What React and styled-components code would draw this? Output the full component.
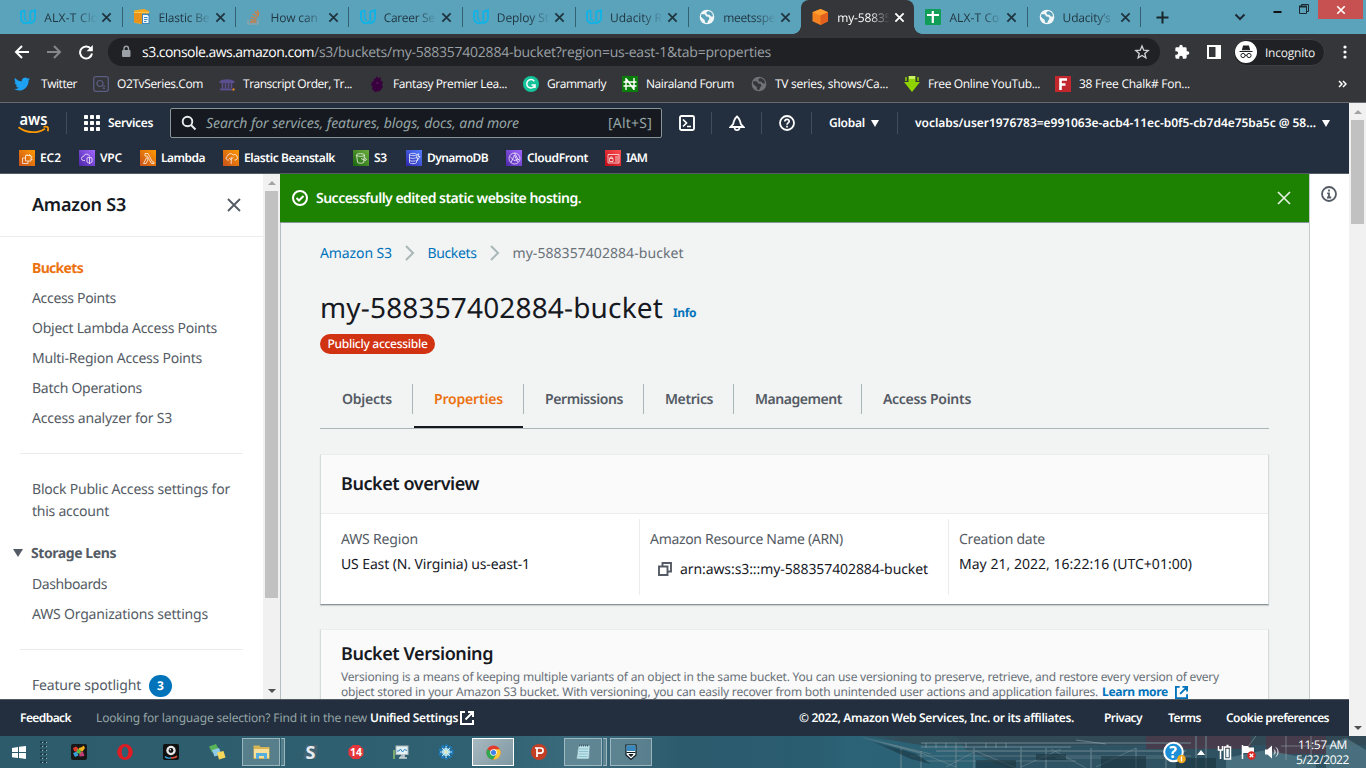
import React, { useLayoutEffect, useRef } from 'react';
import styled, { createGlobalStyle, css } from 'styled-components';

const EMBER = '"Noto Sans", "Open Sans", sans-serif';
const SEGOE = '"Open Sans", "Noto Sans", sans-serif';

const Global = createGlobalStyle`
  * { box-sizing: border-box; }
  body { margin: 0; overflow: hidden; font-family: ${EMBER}; }
  svg { display: block; flex: none; }
`;

/* ---------- text that is tracked to a given measure ---------- */
function Measured({ w, children, className }) {
  const ref = useRef(null);
  useLayoutEffect(() => {
    const el = ref.current;
    if (!el || !w) return;
    el.style.letterSpacing = '0px';
    const natural = el.getBoundingClientRect().width;
    el.style.letterSpacing = `${(w - natural) / Math.max(1, el.textContent.length)}px`;
  }, [w, children]);
  return <span className={className} ref={ref}>{children}</span>;
}
const Text = styled(Measured)`
  display: inline-block;
  flex: none;
  white-space: nowrap;
  text-rendering: geometricPrecision;
  font-family: ${p => (p.$ui ? SEGOE : EMBER)};
  font-size: ${p => p.$size || 14}px;
  font-weight: ${p => p.$weight || 400};
  font-style: ${p => (p.$italic ? 'italic' : 'normal')};
  color: ${p => p.$color || 'inherit'};
  margin-bottom: ${p => (!p.$flat && (p.$size === 12 || p.$size === 28) ? 2 : 0)}px;
`;

/* ---------- frame ---------- */
const Screen = styled.div`
  width: 1366px; height: 768px; display: flex; flex-direction: column; overflow: hidden;
  background: #f2f3f3;
`;
const Row = styled.div`display: flex; align-items: center;`;
const Spacer = styled.div`flex: ${p => (p.$w ? `0 0 ${p.$w}px` : '1')};`;

/* ---------- browser chrome ---------- */
const TabStrip = styled.div`
  height: 34px; flex: none; background: #5ba2bb; display: flex; padding-left: 9px;
`;
const TabBox = styled.div`
  position: relative; width: 113.15px; height: 34px; flex: none; display: flex; align-items: center; padding-left: 11.3px;
  color: ${p => (p.$active ? '#fff' : '#1f3640')};
  ${p => p.$active && css`
    background: #35363a; border-radius: 8px 8px 0 0;
    &::before, &::after { content: ''; position: absolute; bottom: 0; width: 8px; height: 8px; }
    &::before { left: -8px; background: radial-gradient(circle at 0 0, transparent 7.5px, #35363a 8px); }
    &::after { right: -8px; background: radial-gradient(circle at 100% 0, transparent 7.5px, #35363a 8px); }
  `}
  ${p => p.$line && css`
    &::after { content: ''; position: absolute; right: -1px; top: 7px; width: 1px; height: 20px; background: #35606f; }
  `}
`;
const TabTitle = styled.div`
  width: 54px; margin-left: 8px; overflow: hidden; height: 20px; display: flex; align-items: center;
  mask-image: linear-gradient(90deg, #000 60%, transparent 98%);
`;
const TabClose = styled.div`margin-left: 3px;`;
const WindowButtons = styled.div`display: flex; align-items: flex-start; margin-left: auto;`;
const CloseWindow = styled.div`
  width: 45px; height: 19px; background: #c75050; display: grid; place-items: center; margin: 0 3px 0 9px;
`;
const Toolbar = styled.div`
  height: 34px; flex: none; background: #35363a; display: flex; align-items: center; padding-top: 2px;
`;
const NavButtons = styled.div`display: flex; gap: 16px; padding-left: 14px; width: 108px;`;
const Omnibox = styled.div`
  width: 1052px; height: 28px; border-radius: 14px; background: #202124; display: flex; align-items: center;
  padding: 0 10px 0 12px; color: #9aa0a6;
`;
const Incognito = styled.div`
  width: 92px; height: 27px; border-radius: 14px; background: #202124; display: flex; align-items: center;
  border: 1px solid #3e3f43; padding-left: 1px; gap: 8px; color: #f1f1f1; margin-left: 12px;
`;
const Bookmarks = styled.div`
  height: 35px; flex: none; background: #35363a; border-bottom: 1px solid #6a6b6e; display: flex;
  align-items: center; padding-left: 14px; color: #fff; padding-bottom: 2px;
`;
const Bookmark = styled.div`display: flex; align-items: center; flex: none; width: ${p => p.$w}px; gap: ${p => p.$gap || 9}px;`;

/* ---------- page ---------- */
const Viewport = styled.div`height: 633px; flex: none; display: flex;`;
const Page = styled.div`width: 1349px; display: flex; flex-direction: column;`;
const Scrollbar = styled.div`
  width: 17px; background: #f1f1f1; display: flex; flex-direction: column; align-items: center;
  justify-content: space-between; flex: none;
`;
const ScrollCap = styled.div`
  height: 17px; display: grid; place-items: center;
`;
const ScrollThumb = styled.div`width: 13px; height: ${p => p.$h}px; background: #c1c1c1;`;
const Fill = styled.div`flex: 1;`;

const AwsHeader = styled.header`
  height: 71px; flex: none; background: #232f3e; color: #fff; border-bottom: 1px solid #545b64;
`;
const AwsTop = styled.div`height: 40px; display: flex; align-items: center; padding-left: 18px;`;
const Divider = styled.div`width: 1px; height: 22px; background: #414d5c; flex: none;`;
const SearchBox = styled.div`
  width: 492px; height: 30px; background: #16191f; border: 1px solid #879596; border-radius: 2px;
  display: flex; align-items: center; padding: 0 9px 0 10px; gap: 9px; color: #95a5a6;
`;
const Favorites = styled.div`height: 30px; display: flex; align-items: center; padding-left: 19px;`;
const Favorite = styled.div`display: flex; align-items: center; gap: 5px; width: ${p => p.$w}px; flex: none;`;
const ServiceTile = styled.div`
  width: 16px; height: 16px; flex: none; display: grid; place-items: center;
  background: linear-gradient(45deg, ${p => p.$from}, ${p => p.$to});
`;

const Body = styled.div`height: 525px; flex: none; display: flex; overflow: hidden;`;
const Sidebar = styled.aside`width: 263px; background: #fff; flex: none; overflow: hidden; color: #545b64;`;
const SideHead = styled.div`
  height: 63px; border-bottom: 1px solid #eaeded; padding: 0 21px 0 32px; display: flex;
  justify-content: space-between; align-items: center; color: #16191f;
`;
const SideList = styled.nav`padding: ${p => p.$pad || 0}px 0 0 32px;`;
const SideItem = styled.div`height: ${p => p.$h || 30}px; display: flex; align-items: center;`;
const SideRule = styled.div`height: 1px; background: #eaeded; margin: ${p => p.$top}px 20px 0;`;
const SideSection = styled.div`height: 30px; display: flex; align-items: center; padding-left: 13px; gap: 8px; margin-top: 16px;`;
const Count = styled.div`
  width: 23px; height: 22px; border-radius: 11px; background: #0073bb; color: #fff; display: grid; place-items: center; margin: 1px 0 0 8px;
`;
const Main = styled.main`
  width: 1029px; flex: none; background: #f2f3f3; overflow: hidden;
`;
const Flash = styled.div`
  height: 49px; background: #1d8102; border-bottom: 1px solid #879596; display: flex; align-items: center;
  padding: 0 17px 0 12px; gap: 8px; color: #fff;
`;
const Content = styled.div`padding: 0 40px 0 39px; border-left: 1px solid #b8bfc2;`;
const Breadcrumbs = styled.div`height: 60px; display: flex; align-items: center; color: #0073bb;`;
const Crumb = styled.div`display: flex; align-items: center; width: ${p => p.$w}px;`;
const TitleRow = styled.div`height: 51px; display: flex; align-items: center;`;
const InfoLink = styled.div`margin: 9px 0 0 10px; color: #0073bb; display: flex;`;
const Pill = styled.div`
  width: 115px; height: 20px; border-radius: 10px; background: #d13212; color: #fff; display: grid; place-items: center;
`;
const Tabs = styled.div`
  height: 46px; margin-top: 29px; border-bottom: 1px solid #aab7b8; display: flex; color: #545b64;
`;
const PageTab = styled.div`
  width: ${p => p.$w}px; height: 45px; padding: 0 0 13px ${p => p.$inset || 21}px; display: flex; align-items: center; flex: none;
  ${p => p.$active && css`
    color: #ec7211; border-bottom: 2px solid #16191f; padding-bottom: 11px; padding-left: 20px;
  `}
`;
const TabSeparator = styled.div`width: 1px; height: 30px; margin-top: 1px; background: #aab7b8; flex: none; margin-right: ${p => p.$gap || 0}px;`;
const Card = styled.section`
  background: #fff; border: 1px solid #d5dbdb; border-top-color: #eaeded; margin-top: ${p => p.$top}px;
  height: ${p => p.$h}px; box-shadow: 0 1px 1px rgba(0, 28, 36, .15); ${p => p.$line && 'border-bottom-color: #879596;'}
`;
const CardHead = styled.div`
  height: 59px; border-bottom: 1px solid #eaeded; background: #fafafa; padding: 0 20px 1px; display: flex; align-items: center; color: #16191f;
`;
const Columns = styled.div`display: flex; padding-top: 5px;`;
const Column = styled.div`
  width: ${p => p.$w}px; height: 76px; padding: ${p => p.$pad}; border-right: ${p => (p.$last ? 0 : 1)}px solid #eaeded;
`;
const Line = styled.div`height: ${p => p.$h}px; display: flex; align-items: center; gap: ${p => p.$gap || 0}px; margin-top: ${p => p.$top || 0}px; padding-left: ${p => p.$left || 0}px;`;
const VersionPanel = styled.div`background: #fafafa; height: 100%; padding: 12px 20px 0; color: #687078;`;
const HelpPanel = styled.aside`
  width: 40px; background: #fff; border-left: 1px solid #c5cbcd; display: flex; padding: 12px 0 0 11px;
`;
const Footer = styled.footer`
  height: 37px; flex: none; background: #232f3e; border-top: 1px solid #545b64; display: flex; align-items: center; color: #fff; padding-left: 20px;
`;

/* ---------- taskbar ---------- */
const TaskbarBox = styled.div`
  position: relative; height: 32px; flex: none; background: linear-gradient(90deg, #2d5b6b, #2f6172 35%, #3a6a7b 42%, #2c5b6d 50%, #2a5d70 60%, #2c6377 62%, #315a69);
  display: flex; align-items: center; overflow: hidden;
`;
const Wallpaper = styled.svg`
  position: absolute; right: 0; top: 0;
  mask-image: linear-gradient(90deg, transparent, #000 8%);
`;
const TaskSlot = styled.div`
  width: ${p => p.$w}px; height: 28px; display: grid; place-items: center; flex: none; margin-left: ${p => p.$ml || 0}px;
  ${p => p.$open && css`background: rgba(255, 255, 255, .2); border: 1px solid rgba(220, 235, 240, .5);`}
  ${p => p.$front && css`background: linear-gradient(135deg, #a8b9c0, #7d98a2); border: 1px solid #fff;`}
`;
const StackEdge = styled.div`width: 4px; height: 28px; border: 1px solid rgba(220, 235, 240, .5); border-left: 0; background: rgba(255, 255, 255, .2); margin-left: 1px; flex: none;`;
const Tray = styled.div`position: relative; margin-left: auto; display: flex; align-items: center; color: #fff; padding-right: 17px;`;
const Clock = styled.div`
  display: flex; flex-direction: column; align-items: center; margin-left: 16px; line-height: 15px;
`;

/* ---------- icons ---------- */
const X = ({ s = 11, c = 'currentColor', t = 1.8 }) => (
  <svg width={s} height={s} viewBox="0 0 12 12"><path d="M1.5 1.5l9 9M10.5 1.5l-9 9" stroke={c} strokeWidth={t} fill="none" /></svg>
);
const Caret = ({ w = 10, h = 8, c = '#fff', up }) => (
  <svg width={w} height={h} viewBox="0 0 10 8" preserveAspectRatio="none"><path d={up ? 'M0 8L5 0l5 8z' : 'M0 0h10L5 8z'} fill={c} /></svg>
);
const Udacity = () => (
  <svg width="16" height="16" viewBox="0 0 16 16" fill="none" stroke="#10b3e6">
    <path d="M4.600 1.400L1 2.900v5.600c0 3.400 2 5.600 5 5.600 1.600 0 2.900-.6 3.800-1.600" strokeWidth="1.900" />
    <path d="M4.600 1v7.300c0 1.900.8 3 2.400 3.400" strokeWidth="1.500" />
    <path d="M10.300 12V2.800L15 1.200v7.300c0 3.200-2.200 5.400-5.600 5.700" strokeWidth="1.900" />
  </svg>
);
const Globe = ({ fg = '#f4f7f8', bg = '#5ba2bb' }) => (
  <svg width="16" height="16" viewBox="0 0 16 16">
    <circle cx="8" cy="8" r="7.300" fill={fg} />
    <path d="M2.200 5.200h3.600l1.400 2.300 2.300.3 1 2-1.300 1.600-1 2.600-2.200-.4-.3-2.600-1.900-1.500L2 7.800zM9 2l-1.800 1.400.8 2 2.500.4 1.400 1.800 2.200-.2-.8-2.800-1.800-1.800z" fill={bg} />
  </svg>
);
const Beanstalk = () => (
  <svg width="17" height="16" viewBox="0 0 17 16">
    <path d="M1 1.500L11 0l5 2v9l-9 4-6-1.500z" fill="#f5a81c" /><path d="M1 4h8v10.500L1 13z" fill="#e8941a" />
    <path d="M1 3.500h15" stroke="#ffc750" /><path d="M9 4.500h7.500V15H9z" fill="#3d87bd" /><path d="M10 6h4.500l1 1.200V14H10z" fill="#eef6fc" />
    <path d="M11 8.500h3.500M11 10.500h3.500M11 12.500h2.500" stroke="#3d87bd" />
  </svg>
);
const StackOverflow = () => (
  <svg width="16" height="16" viewBox="0 0 16 16" fill="none">
    <path d="M1 10.500V15h10v-4.500" stroke="#9aa5a8" strokeWidth="1.200" />
    <path d="M3 13h6.300M3.200 10.700l6 .6M4 8l5.700 1.700M5.600 5l5 3M8 2.200l3.500 4.700M10.700 1l.9 5" stroke="#d07f42" strokeWidth="1.300" />
  </svg>
);
const Cube = () => (
  <svg width="17" height="16" viewBox="0 0 17 16">
    <path d="M8.500 0L16 3.200v9L8.500 16 .5 12.200v-9z" fill="#f58220" /><path d="M8.500 0L16 3.200 8.500 6.500.5 3.200z" fill="#ff9d2e" /><path d="M8.500 6.500L16 3.200v9L8.500 16z" fill="#e2601d" />
  </svg>
);
const Sheets = () => (
  <svg width="16" height="16" viewBox="0 0 16 16"><rect width="16" height="16" rx="1" fill="#0f9d58" /><path d="M7.800 2v12M2 6h12" stroke="#fff" strokeWidth="2.200" /></svg>
);
const External = ({ s = 14, c = '#fff' }) => (
  <svg width={s} height={s} viewBox="0 0 14 14" fill="none" stroke={c} strokeWidth="2"><path d="M5 1H1v12h12V9M8 1h5v5M13 1L5.500 8.500" /></svg>
);
const PixelText = ({ x, y, size, fill, children, weight = 700 }) => (
  <text x={x} y={y} fontSize={size} fill={fill} fontWeight={weight} textAnchor="middle" fontFamily="Open Sans, sans-serif">{children}</text>
);

/* ---------- data ---------- */
const tabs = [
  { icon: <Udacity />, title: 'ALX-T Clo', w: 54 },
  { icon: <Beanstalk />, title: 'Elastic Be', w: 51 },
  { icon: <StackOverflow />, title: 'How can', w: 47 },
  { icon: <Udacity />, title: 'Career Se', w: 51 },
  { icon: <Udacity />, title: 'Deploy St', w: 52 },
  { icon: <Udacity />, title: 'Udacity R', w: 52 },
  { icon: <Globe />, title: 'meetsspe', w: 52 },
  { icon: <Cube />, title: 'my-58835', w: 54, active: true },
  { icon: <Sheets />, title: 'ALX-T Co', w: 50 },
  { icon: <Globe />, title: 'Udacity’s', w: 48 },
];

const bookmarks = [
  { label: 'Twitter', w: 36, slot: 79, gap: 11, icon: (
    <svg width="16" height="16" viewBox="0 0 24 24"><path fill="#1da1f2" d="M23.950 4.570a10 10 0 01-2.820.770 4.960 4.960 0 002.160-2.720c-.950.550-2 .950-3.130 1.180a4.920 4.920 0 00-8.380 4.480C7.690 8.090 4.070 6.130 1.640 3.160a4.920 4.920 0 001.520 6.570 4.900 4.900 0 01-2.230-.610v.060a4.920 4.920 0 003.950 4.830 5 5 0 01-2.210.080 4.940 4.940 0 004.600 3.420A9.870 9.870 0 010 19.540a13.990 13.990 0 007.550 2.210c9.140 0 14.300-7.720 14.300-14.420l-.020-.640a10 10 0 002.120-2.120z" /></svg>) },
  { label: 'O2TvSeries.Com', w: 86, slot: 126, gap: 8, icon: (
    <svg width="16" height="16" viewBox="0 0 16 16" fill="none" stroke="#5a5d84"><rect x=".7" y=".7" width="14.600" height="14.600" rx="2" strokeWidth="1.300" /><circle cx="7" cy="7.500" r="3" strokeWidth="1.200" /><path d="M10 10h2l-2 2.500h2" strokeWidth=".9" /></svg>) },
  { label: 'Transcript Order, Tr...', w: 109, slot: 150, gap: 8, icon: (
    <svg width="16" height="16" viewBox="0 0 16 16"><path d="M.5 5.500C3 2.500 13 2.500 15.500 5.500V7H.5z" fill="#5c4f8f" /><path d="M3.500 7v6M6.500 7v6M9.500 7v6M12.500 7v5" stroke="#5c4f8f" strokeWidth="1.600" /><path d="M1 13.500h12" stroke="#5c4f8f" strokeWidth="1.800" /><circle cx="14.500" cy="13.500" r="1.200" fill="#d9822b" /></svg>) },
  { label: 'Fantasy Premier Lea...', w: 114, slot: 154, gap: 8, icon: (
    <svg width="16" height="16" viewBox="0 0 16 16"><path d="M5 2l1.500 1L8 0l1.500 2.500L12 1l-.5 3.500L14 6l-1 3 1 2-3 4-5 1-3-3 .5-2.500L2 9l1-3 2-1.500z" fill="#38003c" /><path d="M7 6l3 1-2 1z" fill="#5f2a64" /></svg>) },
  { label: 'Grammarly', w: 59, slot: 99, gap: 8, icon: (
    <svg width="16" height="16" viewBox="0 0 16 16"><circle cx="8" cy="8" r="8" fill="#15c39a" /><path d="M11.300 5.200A4.200 4.200 0 1012 9H8.500m3.500 0v3" stroke="#fff" strokeWidth="1.500" fill="none" /></svg>) },
  { label: 'Nairaland Forum', w: 88, slot: 129, gap: 8, icon: (
    <svg width="16" height="16" viewBox="0 0 16 16"><rect width="16" height="16" fill="#0b7d0b" /><path d="M4 2v12M12 2v12M4 2.500l8 11M1.500 6h13M1.500 10h13" stroke="#fff" strokeWidth="1.400" fill="none" /></svg>) },
  { label: 'TV series, shows/Ca...', w: 113, slot: 153, gap: 8, icon: <Globe fg="#6f7276" bg="#35363a" /> },
  { label: 'Free Online YouTub...', w: 112, slot: 151, gap: 8, icon: (
    <svg width="16" height="16" viewBox="0 0 16 16"><path d="M4.500 0h7v6H16l-8 10L0 6h4.500z" fill="#8fd400" /><path d="M5 0h6v3H5z" fill="#c8f060" /><path d="M2 1v4M14 1v4" stroke="#8fd400" strokeWidth="1.500" /></svg>) },
  { label: '38 Free Chalk# Fon...', w: 111, slot: 140, gap: 8, icon: (
    <svg width="16" height="16" viewBox="0 0 16 16"><rect width="16" height="16" fill="#c1272d" /><path d="M5.500 14V3.500h6.500M5.500 8.500h5" stroke="#fff" strokeWidth="2.600" fill="none" /></svg>) },
];

const orange = ['#c8511b', '#ff9900'];
const purple = ['#4d27a8', '#a166ff'];
const favorites = [
  { label: 'EC2', w: 21, slot: 60, g: orange, d: 'M5.500 4.500h5.500v5.500H5.500zM5.500 7H2.500v5.500H8V10M7 4.500V3M9.500 4.500V3M11 6h1.500M11 8.500h1.500' },
  { label: 'VPC', w: 22, slot: 61, g: purple, d: 'M5 9.500H3.500a2 2 0 010-4A3.200 3.200 0 019.500 5M7 7l2.500-1L12 7v4l-2.500 1.500L7 11zM9.500 6v6.500' },
  { label: 'Lambda', w: 44, slot: 83, g: orange, d: 'M4 2.500h3L11.500 11H13v1.500h-2.500L6.200 5H4zM5.700 6.500L2.500 12.500H5l2-3.700z' },
  { label: 'Elastic Beanstalk', w: 91, slot: 130, g: orange, d: 'M5 9H3.500a2 2 0 010-3.800A3 3 0 019 4a2.500 2.500 0 013 5h-1.500M7.200 13V6M7.200 9L5 7M7.200 8L9.500 6.500' },
  { label: 'S3', w: 13, slot: 53, g: ['#1b660f', '#6cae3e'], d: 'M2.500 4c0-1.800 8-1.800 8 0s-8 1.800-8 0zM2.500 4l1.200 7.500c1.500 1 4.500 1 6 0L10.500 4M7 7.500l4.500 2 1-1.500-2-1.500' },
  { label: 'DynamoDB', w: 61, slot: 100, g: ['#2e27ad', '#527fff'], d: 'M2.500 3.500c0-1.500 7-1.500 7 0s-7 1.500-7 0zM2.500 3.500v8c0 1.500 7 1.500 7 0V9.500M2.500 6.200c0 1.400 5 1.400 6 .7M2.500 9c0 1.400 5 1.400 6 .7M10.500 3L9 7h2l-1 3 3-4.500h-2l1-2.500z' },
  { label: 'CloudFront', w: 61, slot: 99, g: purple, d: 'M7.500 2a5.500 5.500 0 100 11 5.500 5.500 0 000-11zM4 11.500L7.500 4l3 7M3 5.500l4 4 5-1M7.500 2l4 7' },
  { label: 'IAM', w: 21, slot: 60, g: ['#bd0816', '#ff5252'], d: 'M2 3.500h11v8.500H2zM3.500 7.500h3.500v3H3.500zM4.200 7.500V6h2v1.500M9 6h3M9 8h3M9 10h3' },
];

const navTop = [['Access Points', 84], ['Object Lambda Access Points', 185], ['Multi-Region Access Points', 170], ['Batch Operations', 110], ['Access analyzer for S3', 140]];

const pageTabs = [
  { label: 'Objects', w: 50, slot: 92, gap: 1, inset: 22 },
  { label: 'Properties', w: 69, slot: 109, active: true },
  { label: 'Permissions', w: 78, slot: 119 },
  { label: 'Metrics', w: 48, slot: 89 },
  { label: 'Management', w: 87, slot: 127 },
  { label: 'Access Points', w: 88, slot: 120, last: true },
];

/* ---------- sections ---------- */
function Browser() {
  return (
    <>
      <TabStrip>
        {tabs.map((t, i) => (
          <TabBox key={i} $active={t.active} $line={i !== 6 && i !== 7}>
            {t.icon}
            <TabTitle><Text $ui $flat $size={12} w={t.w}>{t.title}</Text></TabTitle>
            <TabClose><X s={11} t={2} /></TabClose>
          </TabBox>
        ))}
        <Row><Spacer $w={16} /><svg width="13" height="13" viewBox="0 0 13 13"><path d="M6.500.5v12M.5 6.500h12" stroke="#18262c" strokeWidth="2" /></svg></Row>
        <WindowButtons>
          <svg width="12" height="34" viewBox="0 0 12 34"><path d="M1.500 14.500L6 19l4.500-4.500" stroke="#1c2c33" strokeWidth="2" fill="none" /></svg>
          <Spacer $w={27} />
          <svg width="9" height="20"><path d="M.5 12h8" stroke="#111" strokeWidth="2" /></svg>
          <Spacer $w={17} />
          <svg width="10" height="20" viewBox="0 0 10 20" fill="none" stroke="#1a2a30"><path d="M.5 6.500h7v7h-7zM2.500 6V4.500h7v7H8" /><path d="M0 6.500h8" strokeWidth="2" /></svg>
        </WindowButtons>
        <CloseWindow><X s={10} c="#fff" t={2} /></CloseWindow>
      </TabStrip>
      <Toolbar>
        <NavButtons>
          <svg width="16" height="16" viewBox="0 0 16 16"><path d="M15 8H2M8 2L2 8l6 6" stroke="#fff" strokeWidth="2" fill="none" /></svg>
          <svg width="16" height="16" viewBox="0 0 16 16"><path d="M1 8h13M8 2l6 6-6 6" stroke="#85878b" strokeWidth="2" fill="none" /></svg>
          <svg width="16" height="16" viewBox="0 0 16 16"><path d="M13 5A6 6 0 1014 9.500" stroke="#fff" strokeWidth="2" fill="none" /><path d="M14.800 1v6.200H8.600z" fill="#fff" /></svg>
        </NavButtons>
        <Omnibox>
          <svg width="12" height="14" viewBox="0 0 12 14"><rect x="2" y="5" width="8.500" height="7" rx="1" fill="#9aa0a6" /><path d="M4 6V3.500a2.200 2.200 0 014.500 0V6" stroke="#9aa0a6" strokeWidth="1.400" fill="none" /></svg>
          <Spacer $w={10} />
          <Text $ui $size={14} w={172} $color="#fff">s3.console.aws.amazon.com</Text>
          <Text $ui $size={14} w={457}>/s3/buckets/my-588357402884-bucket?region=us-east-1&amp;tab=properties</Text>
          <Spacer />
          <svg width="16" height="16" viewBox="0 0 24 24"><path d="M12 3l2.600 6.200 6.700.6-5.100 4.400 1.600 6.600L12 17.300l-5.800 3.500 1.600-6.600L2.700 9.800l6.700-.6z" stroke="#d0d3d6" strokeWidth="2" fill="none" /></svg>
        </Omnibox>
        <Spacer $w={14} />
        <svg width="16" height="16" viewBox="0 0 24 24"><path fill="#fff" d="M20.500 11H19V7a2 2 0 00-2-2h-4V3.500a2.500 2.500 0 00-5 0V5H4a2 2 0 00-2 2v3.800h1.500a2.700 2.700 0 010 5.400H2V20a2 2 0 002 2h3.800v-1.500a2.700 2.700 0 015.400 0V22H17a2 2 0 002-2v-4h1.500a2.500 2.500 0 000-5z" /></svg>
        <Spacer $w={17} />
        <svg width="14" height="14" viewBox="0 0 14 14"><rect width="14" height="14" fill="#fff" /><rect x="2" y="2" width="6.500" height="10" fill="#35363a" /></svg>
        <Incognito>
          <svg width="22" height="22" viewBox="0 0 22 22"><circle cx="11" cy="11" r="11" fill="#fff" /><path d="M4.500 10.500h13M7.500 8.800L8.500 5h5l1 3.800z" stroke="#202124" strokeWidth="1.100" fill="#202124" /><circle cx="8" cy="14.500" r="2.100" stroke="#202124" fill="none" /><circle cx="14" cy="14.500" r="2.100" stroke="#202124" fill="none" /><path d="M10 14.300h2" stroke="#202124" /></svg>
          <Text $ui $flat $size={12} w={50}>Incognito</Text>
        </Incognito>
        <Spacer $w={18} />
        <svg width="4" height="14" viewBox="0 0 4 14" fill="#fff"><circle cx="2" cy="2" r="1.600" /><circle cx="2" cy="7" r="1.600" /><circle cx="2" cy="12" r="1.600" /></svg>
      </Toolbar>
      <Bookmarks>
        {bookmarks.map(b => (
          <Bookmark key={b.label} $w={b.slot} $gap={b.gap}>{b.icon}<Text $ui $size={12} w={b.w}>{b.label}</Text></Bookmark>
        ))}
        <Spacer />
        <svg width="9" height="8" viewBox="0 0 9 8"><path d="M1 1l3 3-3 3M5 1l3 3-3 3" stroke="#fff" strokeWidth="1.500" fill="none" /></svg>
        <Spacer $w={19} />
      </Bookmarks>
    </>
  );
}

function Header() {
  return (
    <AwsHeader>
      <AwsTop>
        <svg width="32" height="29" viewBox="0 -6 32 29">
          <text x="15.500" y="9.500" fontSize="16" fontWeight="600" fill="#fff" textAnchor="middle" textLength="28" lengthAdjust="spacingAndGlyphs" fontFamily="Noto Sans, sans-serif">aws</text>
          <path d="M.5 12.300c8.500 6.400 19.500 6.200 26.500 1.400M25.500 11.900c3.200-.7 5.700-.5 4.200 4.300" stroke="#ff9900" strokeWidth="1.800" fill="none" />
        </svg>
        <Spacer $w={16} /><Divider /><Spacer $w={17} />
        <svg width="16" height="16" viewBox="0 0 16 16" fill="#fff">
          {[0, 6, 12].map(y => [0, 6, 12].map(x => <rect key={`${x}-${y}`} x={x} y={y} width="4" height="4" rx=".7" />))}
        </svg>
        <Spacer $w={8} />
        <Text $size={12} $weight={600} w={45}>Services</Text>
        <Spacer $w={17} />
        <SearchBox>
          <svg width="16" height="16" viewBox="0 0 16 16" fill="none" stroke="#eaeded" strokeWidth="1.900"><circle cx="6.500" cy="6.500" r="4.800" /><path d="M10 10l4.500 4.500" /></svg>
          <Text $size={14} $italic w={313}>Search for services, features, blogs, docs, and more</Text>
          <Spacer />
          <Text $size={14} w={44}>[Alt+S]</Text>
        </SearchBox>
        <Spacer $w={17} />
        <svg width="16" height="16" viewBox="0 0 16 16" fill="none" stroke="#fff" strokeWidth="1.900"><rect x="1" y="1" width="14" height="14" rx="1.500" /><path d="M4 4.500L7.500 8 4 11.500M8 11.500h4" strokeWidth="1.700" /></svg>
        <Spacer $w={16} /><Divider /><Spacer $w={17} />
        <svg width="16" height="17" viewBox="0 0 16 17" fill="none" stroke="#fff" strokeWidth="1.800"><path d="M8 1.500c-1.800 1.500-2.800 3-3.200 5L4.200 9 1.500 12h13L11.800 9l-.6-2.500C10.800 4.500 9.800 3 8 1.500zM5.500 12.500c.3 3.600 4.700 3.600 5 0" /></svg>
        <Spacer $w={16} /><Divider /><Spacer $w={17} />
        <svg width="16" height="16" viewBox="0 0 16 16" fill="none" stroke="#fff" strokeWidth="1.800"><circle cx="8" cy="8" r="7" /><path d="M5.800 6.500C6 3.500 10.300 3.800 10.200 6.300 10.100 8 8 7.800 8 9.800M8 10.800v1.700" strokeWidth="1.700" /></svg>
        <Spacer $w={16} /><Divider /><Spacer $w={17} />
        <Text $size={12} $weight={600} w={36}>Global</Text>
        <Spacer $w={6} /><Caret w={8} h={7} /><Spacer $w={18} /><Divider /><Spacer $w={17} />
        <Text $size={12} $weight={600} w={401}>voclabs/user1976783=e991063e-acb4-11ec-b0f5-cb7d4e75ba5c @ 58...</Text>
        <Spacer $w={6} /><Caret w={8} h={7} />
      </AwsTop>
      <Favorites>
        {favorites.map(f => (
          <Favorite key={f.label} $w={f.slot}>
            <ServiceTile $from={f.g[0]} $to={f.g[1]}>
              <svg width="15" height="15" viewBox="0 0 15 15"><path d={f.d} stroke="#fff" strokeWidth=".8" strokeOpacity=".9" fill="none" /></svg>
            </ServiceTile>
            <Text $size={12} $weight={600} w={f.w}>{f.label}</Text>
          </Favorite>
        ))}
      </Favorites>
    </AwsHeader>
  );
}

function SideNav() {
  return (
    <Sidebar>
      <SideHead><Text $size={18} $weight={600} w={94}>Amazon S3</Text><X s={16} c="#545b64" t={1.4} /></SideHead>
      <SideList $pad={16}>
        <SideItem><Text $weight={700} $color="#ec7211" w={51}>Buckets</Text></SideItem>
        {navTop.map(([label, w]) => <SideItem key={label}><Text w={w}>{label}</Text></SideItem>)}
      </SideList>
      <SideRule $top={20} />
      <SideList $pad={24}>
        <SideItem $h={22}><Text w={198}>Block Public Access settings for</Text></SideItem>
        <SideItem $h={22}><Text w={77}>this account</Text></SideItem>
      </SideList>
      <SideSection><Caret w={10} h={8} c="#545b64" /><Text $weight={700} w={85}>Storage Lens</Text></SideSection>
      <SideList $pad={1}>
        <SideItem><Text w={75}>Dashboards</Text></SideItem>
        <SideItem><Text w={176}>AWS Organizations settings</Text></SideItem>
      </SideList>
      <SideRule $top={20} />
      <SideList $pad={20}>
        <SideItem><Text w={109}>Feature spotlight</Text><Count><Text $flat $size={12} $weight={700}>3</Text></Count></SideItem>
      </SideList>
    </Sidebar>
  );
}

const CrumbArrow = () => (
  <svg width="10" height="16" viewBox="0 0 10 16"><path d="M1 1l7 7-7 7" stroke="#aab7b8" strokeWidth="2" fill="none" /></svg>
);

function BucketPage() {
  return (
    <Main>
      <Flash>
        <svg width="16" height="16" viewBox="0 0 16 16" fill="none" stroke="#fff" strokeWidth="2"><circle cx="8" cy="8" r="7" /><path d="M4.500 8l2.500 2.500 4.500-4.500" /></svg>
        <Text $weight={600} w={265}>Successfully edited static website hosting.</Text>
        <Spacer />
        <X s={16} c="#e4f0e0" t={1.3} />
      </Flash>
      <Content>
        <Breadcrumbs>
          <Crumb $w={85}><Text w={72}>Amazon S3</Text></Crumb>
          <Crumb $w={22.5}><CrumbArrow /></Crumb>
          <Crumb $w={62.5}><Text w={49}>Buckets</Text></Crumb>
          <Crumb $w={22.5}><CrumbArrow /></Crumb>
          <Text w={171} $color="#687078">my-588357402884-bucket</Text>
        </Breadcrumbs>
        <TitleRow>
          <Text $size={28} $color="#16191f" w={343}>my-588357402884-bucket</Text>
          <InfoLink><Text $size={12} $weight={700} w={23}>Info</Text></InfoLink>
        </TitleRow>
        <Pill><Text $size={12} $weight={500} w={100}>Publicly accessible</Text></Pill>
        <Tabs>
          {pageTabs.map(t => (
            <React.Fragment key={t.label}>
              <PageTab $w={t.slot} $inset={t.inset} $active={t.active}><Text $weight={600} w={t.w}>{t.label}</Text></PageTab>
              {!t.last && <TabSeparator $gap={t.gap} />}
            </React.Fragment>
          ))}
        </Tabs>
        <Card $top={25} $h={151} $line>
          <CardHead><Text $size={18} $weight={600} w={138}>Bucket overview</Text></CardHead>
          <Columns>
            <Column $w={319} $pad="9px 20px 0">
              <Line $h={22}><Text $color="#545b64" w={77}>AWS Region</Text></Line>
              <Line $h={22} $top={3}><Text $color="#16191f" w={189}>US East (N. Virginia) us-east-1</Text></Line>
            </Column>
            <Column $w={309} $pad="9px 10px 0">
              <Line $h={22}><Text $color="#545b64" w={193}>Amazon Resource Name (ARN)</Text></Line>
              <Line $h={22} $top={8} $left={8} $gap={8}>
                <svg width="14" height="14" viewBox="0 0 14 14" fill="none" stroke="#545b64" strokeWidth="1.900"><path d="M1 4.500h8.500V13H1zM4.500 4V1H13v8.500h-3" /></svg>
                <Text $color="#16191f" w={248}>arn:aws:s3:::my-588357402884-bucket</Text>
              </Line>
            </Column>
            <Column $w={318} $pad="9px 10px 0" $last>
              <Line $h={22}><Text $color="#545b64" w={86}>Creation date</Text></Line>
              <Line $h={22} $top={3}><Text $color="#16191f" w={233}>May 21, 2022, 16:22:16 (UTC+01:00)</Text></Line>
            </Column>
          </Columns>
        </Card>
        <Card $top={24} $h={120}>
          <VersionPanel>
            <Line $h={24}><Text $size={18} $weight={600} $color="#16191f" w={152}>Bucket Versioning</Text></Line>
            <Line $h={15} $top={4}><Text $size={12} w={878}>Versioning is a means of keeping multiple variants of an object in the same bucket. You can use versioning to preserve, retrieve, and restore every version of every</Text></Line>
            <Line $h={15}>
              <Text $size={12} w={757}>object stored in your Amazon S3 bucket. With versioning, you can easily recover from both unintended user actions and application failures.</Text>
              <Spacer $w={4} />
              <Text $size={12} $weight={700} $color="#0073bb" w={66}>Learn more</Text>
              <Spacer $w={7} /><External s={13} c="#0073bb" />
            </Line>
          </VersionPanel>
        </Card>
      </Content>
    </Main>
  );
}

function ScrollTrack({ thumb, down }) {
  return (
    <Scrollbar>
      <ScrollCap><Caret up w={8} h={4} c="#a3a3a3" /></ScrollCap>
      <ScrollThumb $h={thumb} />
      <Fill />
      <ScrollCap><Caret w={8} h={4} c={down} /></ScrollCap>
    </Scrollbar>
  );
}

function PageFooter() {
  return (
    <Footer>
      <Text $size={12} $weight={600} w={51}>Feedback</Text><Spacer $w={25} />
      <Text $size={12} $color="#95a5a6" w={274}>Looking for language selection? Find it in the new&nbsp;</Text>
      <Text $size={12} $weight={600} w={88}>Unified Settings</Text><Spacer $w={2} /><External s={14} />
      <Spacer />
      <Text $size={12} $weight={600} w={275}>© 2022, Amazon Web Services, Inc. or its affiliates.</Text><Spacer $w={30} />
      <Text $size={12} $weight={600} w={38}>Privacy</Text><Spacer $w={26} />
      <Text $size={12} $weight={600} w={33}>Terms</Text><Spacer $w={25} />
      <Text $size={12} $weight={600} w={103}>Cookie preferences</Text><Spacer $w={20} />
    </Footer>
  );
}

function Taskbar() {
  return (
    <TaskbarBox>
      <Wallpaper width="510" height="32" viewBox="0 0 510 32" fill="none">
        <path d="M100 0h410v32H150L110 14z" fill="#2f4f5e" opacity=".7" />
        <path d="M5 0h505v9H65L40 5z" fill="#334853" opacity=".75" />
        <path d="M290 0h105v13h-105zM410 0h60v18h-60z" fill="#4d3a4a" opacity=".8" />
        <path d="M470 10l20-8 20 12v18h-40zM370 22l40-8 50 10v8h-90z" fill="#5b8493" opacity=".6" />
        <path d="M5 1l60 16M65 7h270M65 11h150M80 15h250M45 12v20M65 15v17M100 12v20M118 12v20M165 10v22M190 12v20M235 12v20M280 12v20M310 10v22M340 0v32M350 0v32" stroke="#68838e" strokeWidth="1.500" opacity=".75" />
        <path d="M0 0l75 18M65 17l35 14M90 31l30-16M120 15l40 17M165 31l40-18M195 13l35 19M240 31l40-19M55 20h280M70 25h150M200 22h110" stroke="#7d939b" opacity=".5" />
        <path d="M70 7v5M80 7v5M90 7v5M100 7v5M110 7v5M130 7v5M140 7v5M150 7v5M220 4l30 4M400 0l-15 20M430 0v24M455 0v22M425 10h65" stroke="#9fb0b5" opacity=".5" />
        <path d="M120 24h40v8h-40zM245 20h45v12h-45zM15 5l45 13 15 10-20-5zM180 18h30v6h-30zM320 22h40v10h-40z" fill="#172f3b" opacity=".55" />
      </Wallpaper>
      <TaskSlot $w={14} $ml={12}><svg width="14" height="13" viewBox="0 0 14 13"><path d="M0 2l6-1v5H0zM7 .8L14 0v6H7zM0 7h6v5l-6-.8zM7 7h7v6l-7-1z" fill="#fff" /></svg></TaskSlot>
      <TaskSlot $w={9} $ml={14}><svg width="9" height="23"><g stroke="#1c3c49" strokeWidth="2" strokeDasharray="2 2"><path d="M1 0v23M5 0v23" /></g><g stroke="#a5b9c1" strokeDasharray="1 3"><path d="M2.500 1v22M6.500 1v22" /></g></svg></TaskSlot>
      <TaskSlot $w={16} $ml={22}><svg width="16" height="16" viewBox="0 0 16 16"><rect width="16" height="16" rx="2" fill="#171717" /><path d="M2 4l3-1.500L8 5 5.500 8 3 7z" fill="#e23b2e" /><path d="M8 4l3-1 1.500-1.500L14 4l-2.500 3.500L8 7z" fill="#f2b31c" /><path d="M2 9l4-1.500 1.500 4L4 13z" fill="#3a9fd8" /><path d="M8 8l4-.5 1.500 4.500-5 .5z" fill="#c73b75" /><path d="M6 5l4 1-.5 4L6 9z" fill="#63b53a" /></svg></TaskSlot>
      <TaskSlot $w={16} $ml={30}><svg width="16" height="16" viewBox="0 0 16 16"><ellipse cx="8" cy="8" rx="7.800" ry="7.900" fill="#e01b22" /><ellipse cx="8" cy="8" rx="3.300" ry="5.600" fill="#2f6071" /></svg></TaskSlot>
      <TaskSlot $w={16} $ml={30}><svg width="16" height="16" viewBox="0 0 16 16"><rect width="16" height="16" rx="2" fill="#101010" /><circle cx="8" cy="6.500" r="4.700" fill="#e8e8e8" /><circle cx="8" cy="6.500" r="2.400" fill="#111" /><circle cx="7.300" cy="5.700" r=".7" fill="#fff" /><path d="M2 12.500c2 2.500 4 1.500 6 1.500" stroke="#36a3e0" strokeWidth="1.300" fill="none" /><path d="M8 14c2 0 4.500 0 6-2" stroke="#e2543c" strokeWidth="1.300" fill="none" /></svg></TaskSlot>
      <TaskSlot $w={17} $ml={30}><svg width="17" height="16" viewBox="0 0 17 16"><path d="M0 2.500L7 0l3 6-7 2.500z" fill="#58b457" /><path d="M3 6l7-2 2.500 6.500-7 2z" fill="#8ecbea" /><path d="M8 8.500L14.500 7l2 6.500-6.500 2z" fill="#f5d75b" /></svg></TaskSlot>
      <TaskSlot $w={38} $ml={16} $open><svg width="17" height="16" viewBox="0 0 17 16"><path d="M.5 1.500h6l1 1.500h9v12H.5z" fill="#d8b554" /><path d="M1 5h15v9H1z" fill="#f7e19a" /><path d="M3 9h11v6h-3v-3H6v3H3z" fill="#55aee0" /></svg></TaskSlot><StackEdge />
      <TaskSlot $w={17} $ml={17}><svg width="17" height="19" viewBox="0 -1 17 19"><path d="M4 1h12l-2 14H1z" fill="#4c6678" opacity=".7" /><PixelText x={8.500} y={15} size={18} fill="#e6ecf2">S</PixelText></svg></TaskSlot>
      <TaskSlot $w={16} $ml={29}><svg width="16" height="16" viewBox="0 0 16 16"><path d="M5 1h6l4.500 4v6L11 15H5L.5 11V5z" fill="#e8353b" /><PixelText x={8} y={12} size={10.500} fill="#fff">14</PixelText></svg></TaskSlot>
      <TaskSlot $w={16} $ml={29}><svg width="16" height="16" viewBox="0 0 16 16"><rect x="3" y="2" width="12" height="8.500" fill="#e3f1f5" stroke="#a9b5b9" /><path d="M4 7h2l1.500-2L9.500 8l2-2.500 2.500 1" stroke="#2c85bd" fill="none" /><path d="M8 11h3v2H7M6 14h8" stroke="#c8d2d5" strokeWidth="1.500" fill="none" /><path d="M1 6v9" stroke="#8fc06a" strokeWidth="1.500" /></svg></TaskSlot>
      <TaskSlot $w={16} $ml={29}><svg width="16" height="16" viewBox="0 0 16 16"><circle cx="8" cy="8" r="5.500" stroke="#1c7cc0" strokeWidth="4" strokeDasharray="2.500 1" fill="none" /><circle cx="8" cy="8" r="4" fill="#8fd0e8" /><path d="M4 4l8 8M12 4l-8 8M8 2v12M2 8h12" stroke="#f2fbff" strokeWidth=".8" /><circle cx="8" cy="8" r="1.800" fill="#d8eac0" /></svg></TaskSlot>
      <TaskSlot $w={42} $ml={18} $front><svg width="15" height="15" viewBox="0 0 16 16"><circle cx="8" cy="8" r="7.500" fill="#e33b2e" /><path d="M8 8L1.400 4.400A7.500 7.500 0 007.500 15.500L11 9.800z" fill="#2da94f" /><path d="M8 4.500h6.700A7.500 7.500 0 017.500 15.500L11.200 9.800z" fill="#fcc934" /><circle cx="8" cy="8" r="3.500" fill="#fff" /><circle cx="8" cy="8" r="2.700" fill="#3f7fe8" /></svg></TaskSlot>
      <TaskSlot $w={16} $ml={17}><svg width="16" height="16" viewBox="0 0 16 16"><circle cx="8" cy="8" r="8" fill="#c43e25" /><path d="M6 13V4h3.500a2.500 2.500 0 010 5.200H6M4 4h3" stroke="#fff" strokeWidth="1.700" fill="none" /></svg></TaskSlot>
      <TaskSlot $w={38} $ml={17} $open><svg width="15" height="16" viewBox="0 0 15 16"><path d="M2.500 1.500H14l-1 13.500H.5z" fill="#bfe3ea" stroke="#6c8d99" strokeWidth=".7" /><path d="M3 1.500h10" stroke="#435f6a" strokeWidth="1.800" strokeDasharray="1 1" /><path d="M3 5h9M3 7.500h9M2.500 10h9M2.500 12.500h9" stroke="#81b9c6" strokeWidth=".8" /></svg></TaskSlot><StackEdge />
      <TaskSlot $w={42} $ml={3} $open><svg width="12" height="16" viewBox="0 0 12 16"><path d="M1 1h10v10l-5 4.500L1 11z" fill="#fff" stroke="#0b1a20" strokeWidth="1.200" /><path d="M1.500 1.500h9V7h-9z" fill="#3587bd" /><path d="M1.500 8.500h9M4 10.500h4l-2 2z" fill="#0b1a20" stroke="#0b1a20" /></svg></TaskSlot>
      <Tray>
        <svg width="23" height="23" viewBox="0 0 23 23"><circle cx="10.500" cy="11" r="9.300" fill="#1d8fd6" stroke="#fff" strokeWidth="2" /><PixelText x={10} y={16.500} size={16} fill="#fff">?</PixelText><circle cx="18.500" cy="18" r="4.300" fill="#f0a71c" /><path d="M18.500 15.500v5" stroke="#fff" strokeWidth="1.300" /></svg>
        <Spacer $w={11} /><Caret up w={8} h={5} /><Spacer $w={12} />
        <svg width="15" height="16" viewBox="0 0 15 16" fill="none" stroke="#fff" strokeWidth="1.500"><path d="M7.500 3h6v12h-6zM9.500 1.500h2M1.500 2v4h4V2M3.500 6v9" /><path d="M9.500 5h2v8h-2z" fill="#fff" strokeWidth=".5" /></svg>
        <Spacer $w={9} />
        <svg width="15" height="16" viewBox="0 0 15 16"><path d="M1.500 1v14" stroke="#fff" strokeWidth="1.500" /><path d="M2 2h5l1 1.500h5V9H2z" fill="#fff" /><circle cx="10.500" cy="11.500" r="4.200" fill="#d8231f" /><path d="M8.700 9.700l3.600 3.600M12.300 9.700l-3.600 3.600" stroke="#fff" strokeWidth="1.300" /></svg>
        <Spacer $w={9} />
        <svg width="15" height="14" viewBox="0 0 15 14"><path d="M0 4.500h2.500L7 .5v13l-4.500-4H0z" fill="#fff" /><path d="M9 4.500c1.500 1.500 1.500 3.500 0 5M11 2.500c2.700 2.700 2.700 6.300 0 9" stroke="#fff" fill="none" /></svg>
        <Clock><Text $ui $flat $size={12} w={49}>11:57 AM</Text><Text $ui $flat $size={12} w={53}>5/22/2022</Text></Clock>
      </Tray>
    </TaskbarBox>
  );
}

export default function App() {
  return (
    <Screen>
      <Global />
      <Browser />
      <Viewport>
        <Page>
          <Header />
          <Body>
            <SideNav />
            <ScrollTrack thumb={407} down="#505050" />
            <BucketPage />
            <HelpPanel>
              <svg width="16" height="16" viewBox="0 0 16 16" fill="none" stroke="#545b64" strokeWidth="1.800"><circle cx="8" cy="8" r="7" /><path d="M8 3.500v2M6.200 7.300H8v4M6 11.500h4.200" /></svg>
            </HelpPanel>
          </Body>
          <PageFooter />
        </Page>
        <ScrollTrack thumb={104} down="#505050" />
      </Viewport>
      <Taskbar />
    </Screen>
  );
}
